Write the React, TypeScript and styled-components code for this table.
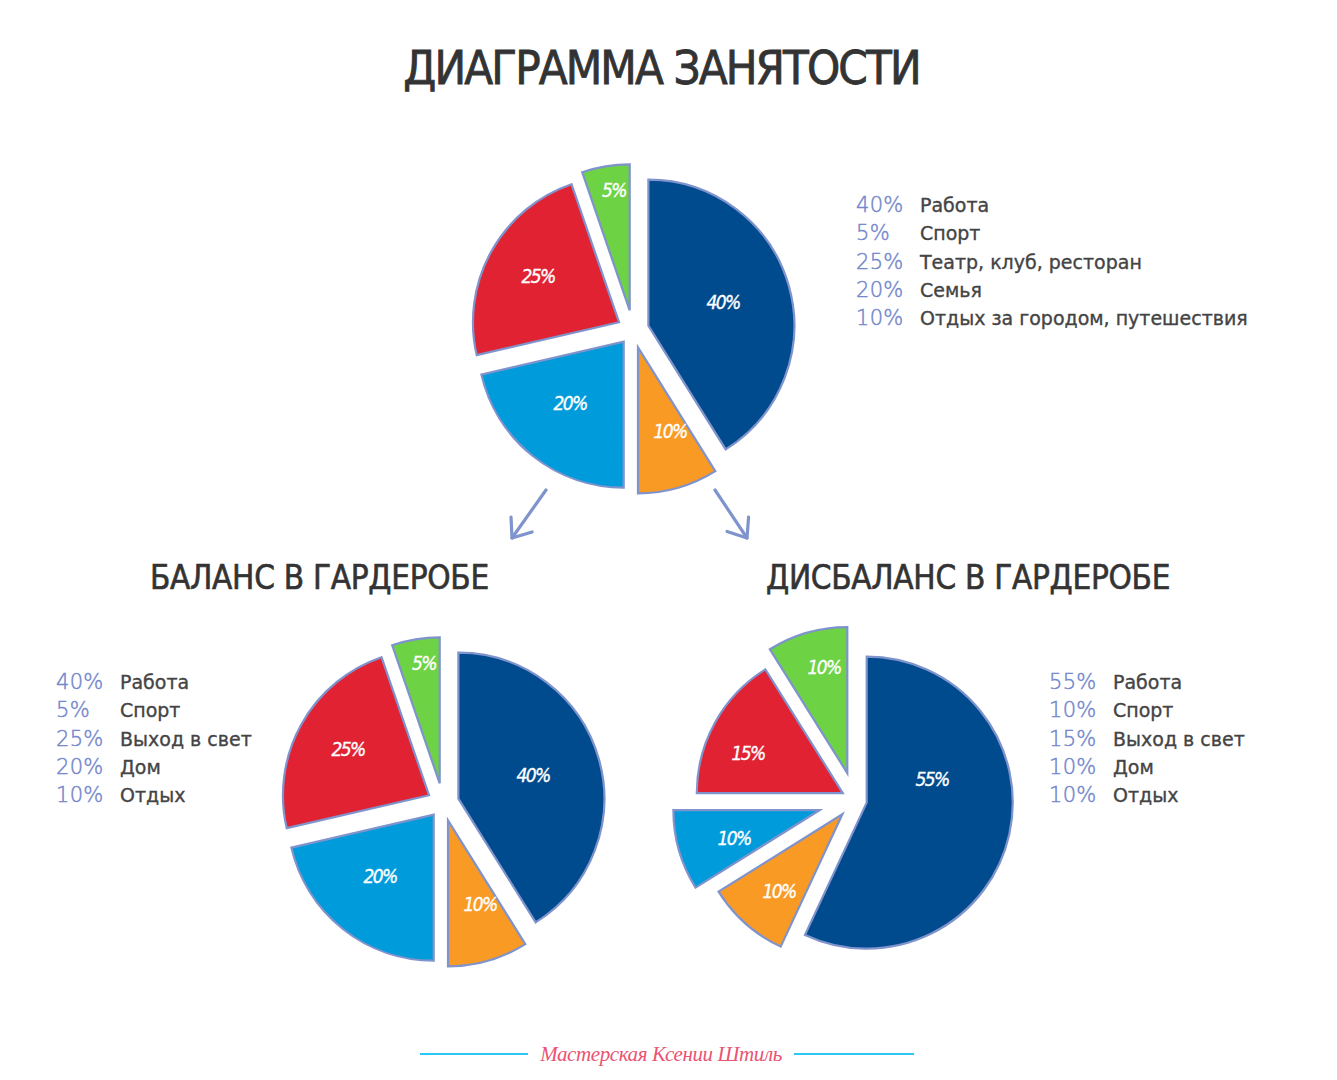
import React from "react";
import styled, { createGlobalStyle } from "styled-components";

const GlobalStyle = createGlobalStyle`
    html, body {
        margin: 0;
        padding: 0;
        background: #ffffff;
    }
    body {
        font-family: "DejaVu Sans", "Liberation Sans", sans-serif;
        color: #3a3a3a;
    }
`;

const STROKE = "#7f93cc";
const ACCENT = "#7387cc";

const COLORS = {
    blue: "#004b8d",
    orange: "#f99a24",
    sky: "#009bdb",
    red: "#e02233",
    green: "#6dd244",
};

type Slice = {
    from: number;
    to: number;
    color: string;
    shift: number;
    label: string;
    lx: number;
    ly: number;
};

type LegendRow = { pct: string; text: string };

const topSlices: Slice[] = [
    { from: 0, to: 148, color: COLORS.blue, shift: 16, label: "40%", lx: 90, ly: -28 },
    { from: 148, to: 180, color: COLORS.orange, shift: 18, label: "10%", lx: 37, ly: 101 },
    { from: 180, to: 257, color: COLORS.sky, shift: 15, label: "20%", lx: -63, ly: 73 },
    { from: 257, to: 341, color: COLORS.red, shift: 16, label: "25%", lx: -95, ly: -54 },
    { from: 341, to: 360, color: COLORS.green, shift: 20, label: "5%", lx: -19, ly: -140 },
];

const unevenSlices: Slice[] = [
    { from: 0, to: 205, color: COLORS.blue, shift: 12, label: "55%", lx: 77, ly: -21 },
    { from: 205, to: 238, color: COLORS.orange, shift: 19, label: "10%", lx: -76, ly: 91 },
    { from: 238, to: 270, color: COLORS.sky, shift: 37, label: "10%", lx: -121, ly: 38 },
    { from: 270, to: 328, color: COLORS.red, shift: 14, label: "15%", lx: -107, ly: -47 },
    { from: 328, to: 360, color: COLORS.green, shift: 28, label: "10%", lx: -31, ly: -133 },
];

const topLegend: LegendRow[] = [
    { pct: "40%", text: "Работа" },
    { pct: "5%", text: "Спорт" },
    { pct: "25%", text: "Театр, клуб, ресторан" },
    { pct: "20%", text: "Семья" },
    { pct: "10%", text: "Отдых за городом, путешествия" },
];

const balanceLegend: LegendRow[] = [
    { pct: "40%", text: "Работа" },
    { pct: "5%", text: "Спорт" },
    { pct: "25%", text: "Выход в свет" },
    { pct: "20%", text: "Дом" },
    { pct: "10%", text: "Отдых" },
];

const imbalanceLegend: LegendRow[] = [
    { pct: "55%", text: "Работа" },
    { pct: "10%", text: "Спорт" },
    { pct: "15%", text: "Выход в свет" },
    { pct: "10%", text: "Дом" },
    { pct: "10%", text: "Отдых" },
];

const Page = styled.div`
    width: 1337px;
    height: 1080px;
    display: flex;
    flex-direction: column;
    overflow: hidden;
`;

const Title = styled.h1`
    margin: 44px 0 0;
    padding-right: 14px;
    font-family: "DejaVu Sans Condensed", "DejaVu Sans", sans-serif;
    font-size: 47px;
    line-height: 47px;
    font-weight: 400;
    letter-spacing: -1.9px;
    -webkit-text-stroke: 0.8px #333333;
    text-align: center;
    color: #333333;
`;

const TopRow = styled.div`
    display: flex;
    align-items: flex-start;
    margin-top: 69px;
    padding-left: 463px;
`;

const BottomRow = styled.div`
    display: flex;
    align-items: flex-start;
    margin-top: 11px;
`;

const Panel = styled.section<{ $width: number }>`
    width: ${(p) => p.$width}px;
    display: flex;
    flex-direction: column;
`;

const Heading = styled.h2<{ $indent: number }>`
    margin: 0;
    padding-left: ${(p) => p.$indent}px;
    font-family: "DejaVu Sans Condensed", "DejaVu Sans", sans-serif;
    font-size: 33px;
    line-height: 33px;
    font-weight: 400;
    letter-spacing: -0.3px;
    -webkit-text-stroke: 0.6px #333333;
    color: #333333;
    white-space: nowrap;
`;

const PanelBody = styled.div<{ $top: number }>`
    display: flex;
    align-items: flex-start;
    margin-top: ${(p) => p.$top}px;
`;

const Legend = styled.ul<{ $top: number; $left: number; $width?: number }>`
    list-style: none;
    margin: ${(p) => p.$top}px 0 0 ${(p) => p.$left}px;
    padding: 0;
    ${(p) => (p.$width ? `width: ${p.$width}px; flex: none;` : "")}
`;

const LegendItem = styled.li`
    display: flex;
    align-items: baseline;
    height: 28.3px;
    line-height: 28px;
    white-space: nowrap;
`;

const Pct = styled.span`
    width: 64px;
    flex: none;
    font-family: "DejaVu Sans ExtraLight", "DejaVu Sans", sans-serif;
    font-weight: 200;
    font-size: 21px;
    letter-spacing: 0.3px;
    -webkit-text-stroke: 0.45px ${ACCENT};
    color: ${ACCENT};
`;

const ItemText = styled.span`
    font-family: "DejaVu Sans", sans-serif;
    font-size: 19px;
    -webkit-text-stroke: 0.35px #444444;
    color: #444444;
`;

const Chart = styled.svg`
    display: block;
    flex: none;
`;

const SliceLabel = styled.text`
    font-family: "DejaVu Sans Condensed", "DejaVu Sans", sans-serif;
    font-style: italic;
    font-size: 19px;
    fill: #ffffff;
    stroke: #ffffff;
    stroke-width: 0.35px;
    letter-spacing: -1.6px;
`;

const Footer = styled.footer`
    margin-top: auto;
    margin-bottom: 8px;
    height: 36px;
    display: flex;
    align-items: center;
    padding-left: 420px;
`;

const Rule = styled.span<{ $width: number }>`
    width: ${(p) => p.$width}px;
    height: 2px;
    background: #2cc8f5;
`;

const Signature = styled.span`
    width: 266px;
    text-align: center;
    font-family: "Liberation Serif", serif;
    font-style: italic;
    font-size: 21px;
    letter-spacing: -0.4px;
    color: #ea5372;
    white-space: nowrap;
`;

const rad = (deg: number) => (deg * Math.PI) / 180;
const dir = (deg: number) => [Math.sin(rad(deg)), -Math.cos(rad(deg))];

const slicePath = (s: Slice, cx: number, cy: number, r: number) => {
    const [mx, my] = dir((s.from + s.to) / 2);
    const ax = cx + mx * s.shift;
    const ay = cy + my * s.shift;
    const [sx, sy] = dir(s.from);
    const [ex, ey] = dir(s.to);
    const large = s.to - s.from > 180 ? 1 : 0;
    return `M${ax.toFixed(1)} ${ay.toFixed(1)} L${(ax + sx * r).toFixed(1)} ${(ay + sy * r).toFixed(1)} A${r} ${r} 0 ${large} 1 ${(ax + ex * r).toFixed(1)} ${(ay + ey * r).toFixed(1)} Z`;
};

const Arrow: React.FC<{ x1: number; y1: number; x2: number; y2: number }> = ({ x1, y1, x2, y2 }) => {
    const a = Math.atan2(y2 - y1, x2 - x1);
    const len = 21;
    const spread = rad(38);
    const h1 = [x2 - len * Math.cos(a - spread), y2 - len * Math.sin(a - spread)];
    const h2 = [x2 - len * Math.cos(a + spread), y2 - len * Math.sin(a + spread)];
    return (
        <g stroke={STROKE} strokeWidth={3.2} fill="none" strokeLinecap="round" strokeLinejoin="round">
            <line x1={x1} y1={y1} x2={x2} y2={y2} />
            <polyline points={`${h1[0]},${h1[1]} ${x2},${y2} ${h2[0]},${h2[1]}`} />
        </g>
    );
};

const Pie: React.FC<{
    slices: Slice[];
    width: number;
    height: number;
    cx: number;
    cy: number;
    children?: React.ReactNode;
}> = ({ slices, width, height, cx, cy, children }) => (
    <Chart width={width} height={height} viewBox={`0 0 ${width} ${height}`}>
        {slices.map((s, i) => (
            <path key={i} d={slicePath(s, cx, cy, 146)} fill={s.color} stroke={STROKE} strokeWidth={2.2} strokeLinejoin="miter" />
        ))}
        {slices.map((s, i) => (
            <SliceLabel key={`l${i}`} x={cx + s.lx} y={cy + s.ly} textAnchor="middle" dominantBaseline="central">
                {s.label}
            </SliceLabel>
        ))}
        {children}
    </Chart>
);

const LegendList: React.FC<{ rows: LegendRow[]; top: number; left: number; width?: number }> = ({ rows, top, left, width }) => (
    <Legend $top={top} $left={left} $width={width}>
        {rows.map((r) => (
            <LegendItem key={r.text}>
                <Pct>{r.pct}</Pct>
                <ItemText>{r.text}</ItemText>
            </LegendItem>
        ))}
    </Legend>
);

const App: React.FC = () => (
    <Page>
        <GlobalStyle />
        <Title>ДИАГРАММА ЗАНЯТОСТИ</Title>

        <TopRow>
            <Pie slices={topSlices} width={340} height={390} cx={170} cy={170}>
                <Arrow x1={83} y1={330} x2={49} y2={378} />
                <Arrow x1={252} y1={330} x2={284} y2={378} />
            </Pie>
            <LegendList rows={topLegend} top={31} left={53} />
        </TopRow>

        <BottomRow>
            <Panel $width={660}>
                <Heading $indent={150}>БАЛАНС В ГАРДЕРОБЕ</Heading>
                <PanelBody $top={39}>
                    <LegendList rows={balanceLegend} top={35} left={56} width={217} />
                    <Pie slices={topSlices} width={340} height={340} cx={170} cy={170} />
                </PanelBody>
            </Panel>
            <Panel $width={677}>
                <Heading $indent={106}>ДИСБАЛАНС В ГАРДЕРОБЕ</Heading>
                <PanelBody $top={26}>
                    <Pie slices={unevenSlices} width={380} height={350} cx={195} cy={180} />
                    <LegendList rows={imbalanceLegend} top={48} left={9} />
                </PanelBody>
            </Panel>
        </BottomRow>

        <Footer>
            <Rule $width={108} />
            <Signature>Мастерская Ксении Штиль</Signature>
            <Rule $width={120} />
        </Footer>
    </Page>
);

export default App;
